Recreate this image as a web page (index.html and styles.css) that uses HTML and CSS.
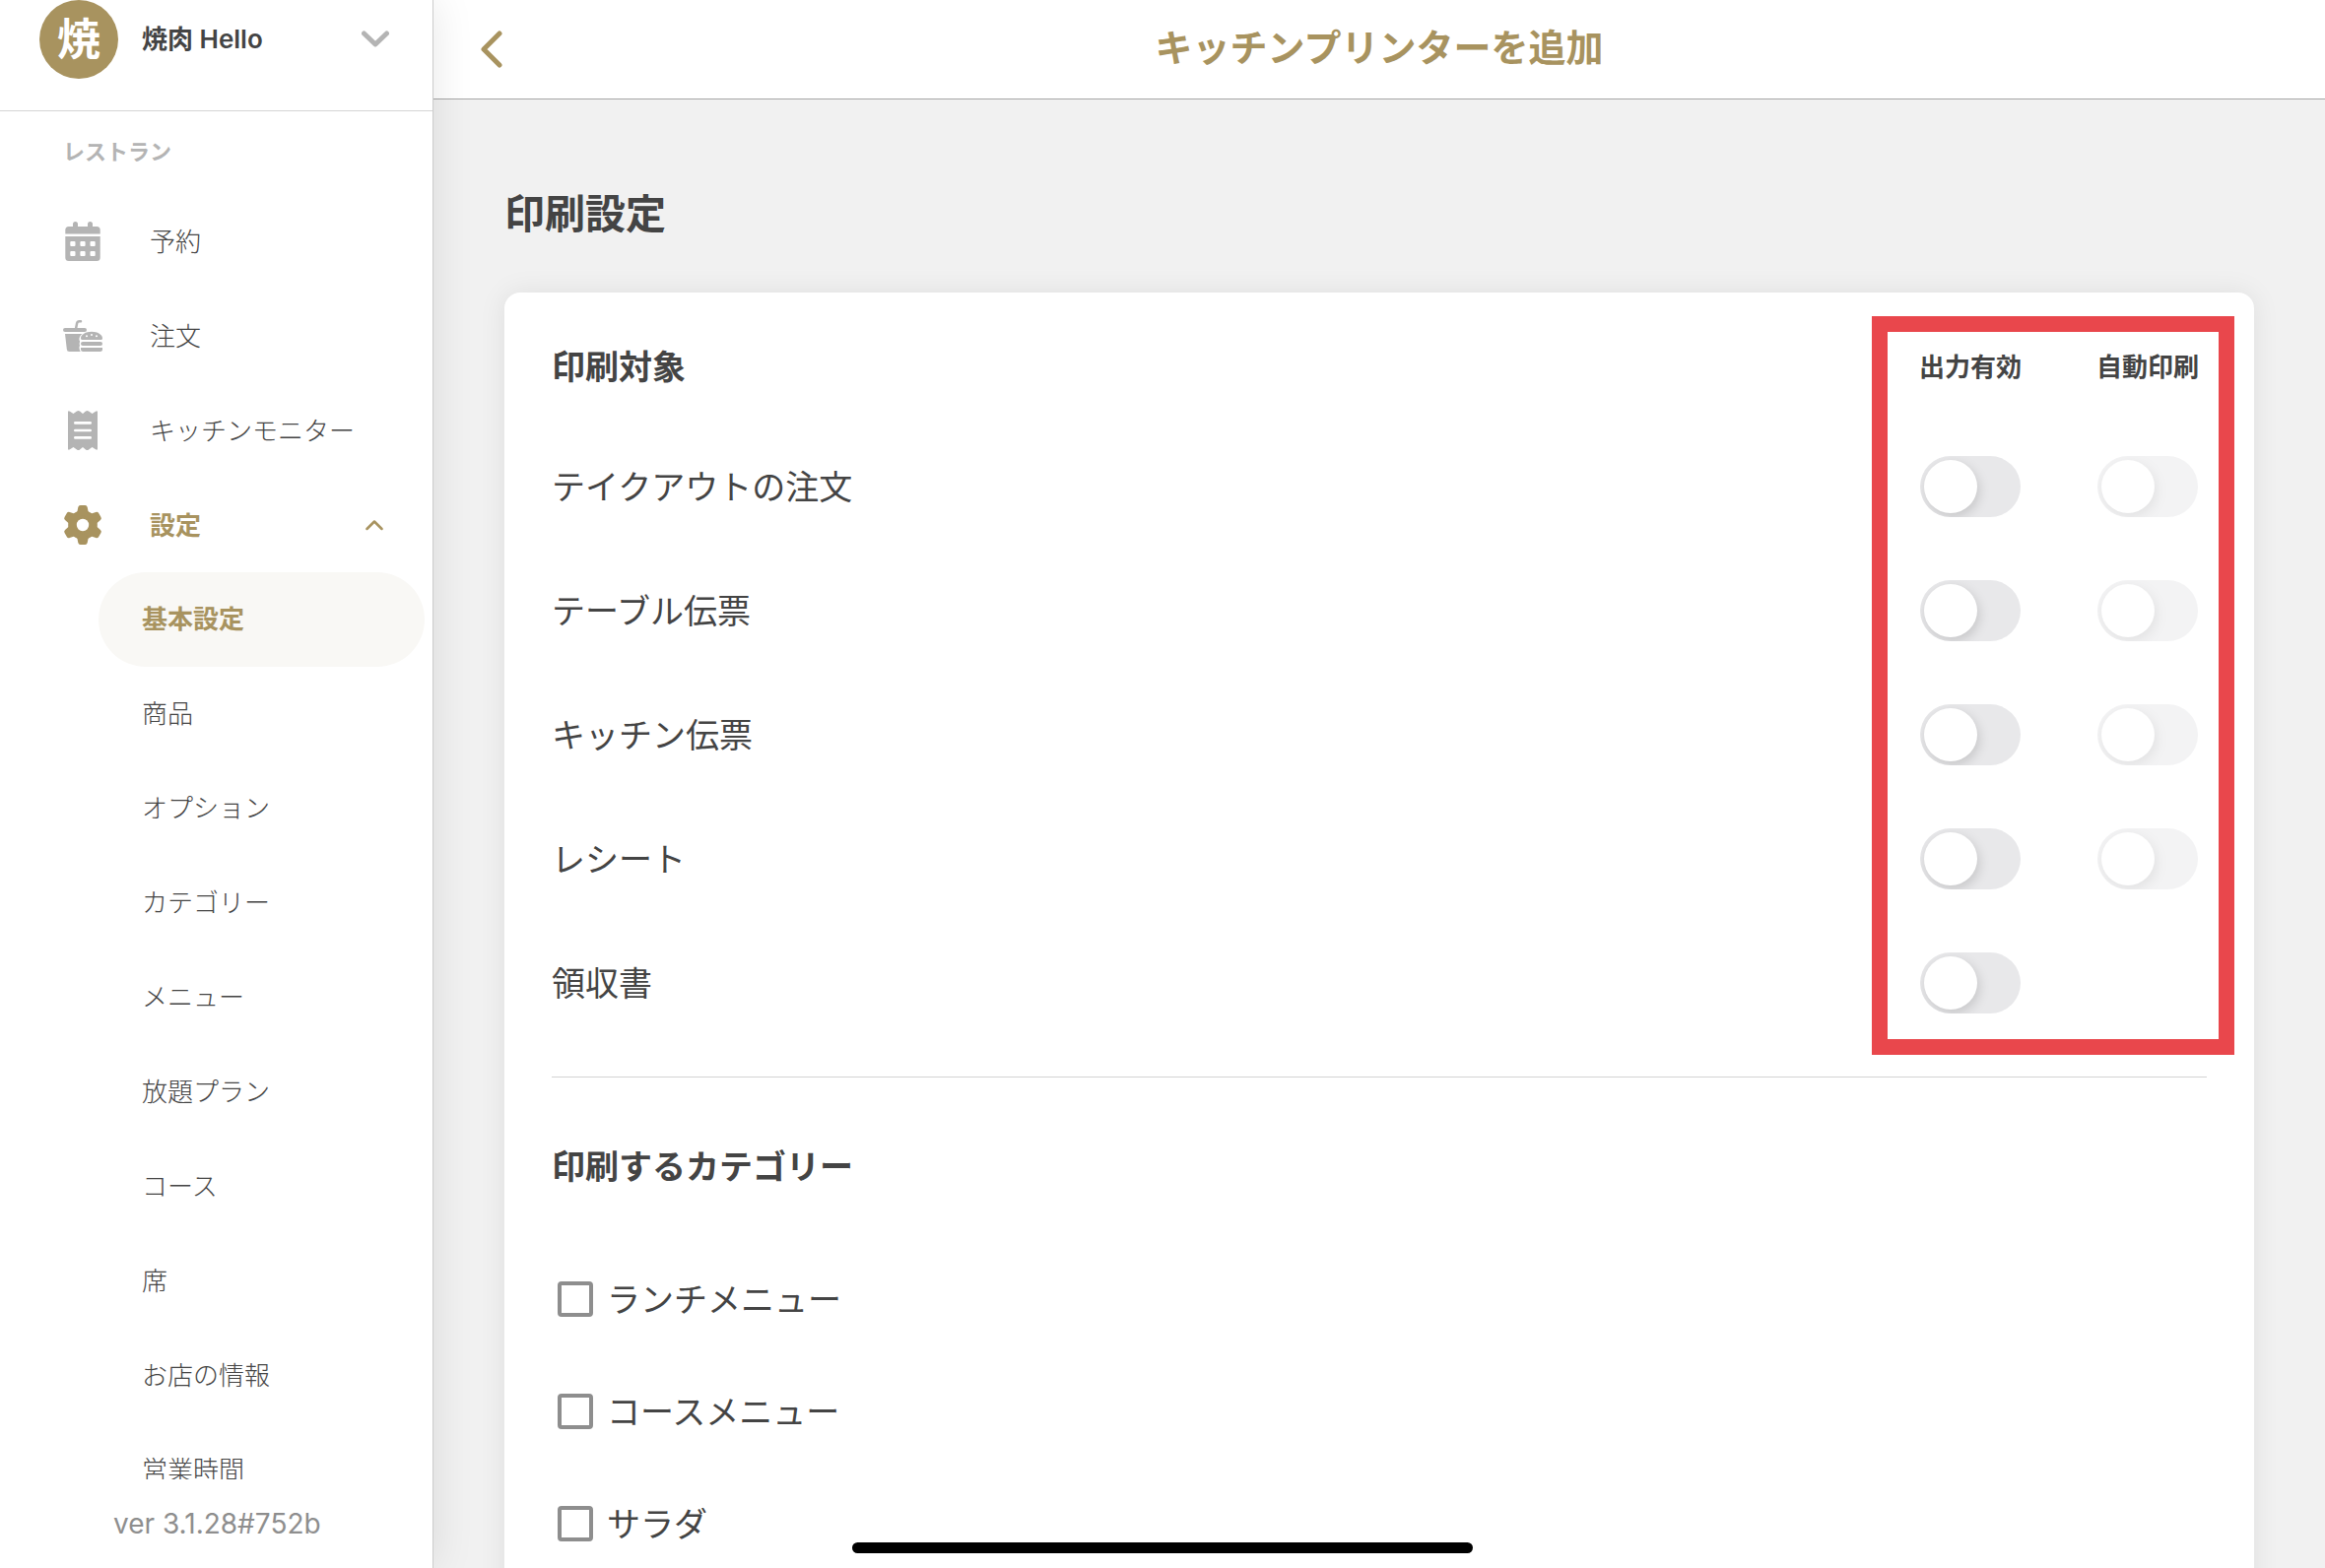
FILE: index.html
```html
<!DOCTYPE html>
<html lang="ja">
<head>
<meta charset="UTF-8">
<meta name="viewport" content="width=device-width, initial-scale=1.0">
<title>キッチンプリンターを追加</title>
<link rel="stylesheet" href="styles.css">
</head>
<body>

<div class="app">
  <aside class="sidebar">
    <button class="account" type="button">
      <span class="avatar">焼</span>
      <span class="account-name">焼肉 Hello</span>
      <svg class="chevron" viewBox="0 0 28 18"><path d="M2.500 3 14 14 25.500 3" fill="none" stroke="currentColor" stroke-width="5" stroke-linecap="round" stroke-linejoin="round"/></svg>
    </button>

    <nav class="menu">
      <h2 class="menu-title">レストラン</h2>
      <a class="menu-item" href="#">
        <svg class="icon" viewBox="0 0 40 40" fill="currentColor">
          <path d="M2.300 12.500V8.500a3.500 3.500 0 0 1 3.500-3.500H10V2.500a2.500 2.500 0 0 1 5 0V5h10V2.500a2.500 2.500 0 0 1 5 0V5h4.200a3.500 3.500 0 0 1 3.500 3.500v4z"/>
          <path fill-rule="evenodd" d="M2.300 15h35.400v21.500a3.500 3.500 0 0 1-3.500 3.500H5.800a3.500 3.500 0 0 1-3.500-3.500zM8.300 20a1 1 0 0 0-1 1v3a1 1 0 0 0 1 1h3.200a1 1 0 0 0 1-1v-3a1 1 0 0 0-1-1zM18.400 20a1 1 0 0 0-1 1v3a1 1 0 0 0 1 1h3.200a1 1 0 0 0 1-1v-3a1 1 0 0 0-1-1zM28.500 20a1 1 0 0 0-1 1v3a1 1 0 0 0 1 1h3.200a1 1 0 0 0 1-1v-3a1 1 0 0 0-1-1zM8.300 30a1 1 0 0 0-1 1v3a1 1 0 0 0 1 1h3.200a1 1 0 0 0 1-1v-3a1 1 0 0 0-1-1zM18.400 30a1 1 0 0 0-1 1v3a1 1 0 0 0 1 1h3.200a1 1 0 0 0 1-1v-3a1 1 0 0 0-1-1zM28.500 30a1 1 0 0 0-1 1v3a1 1 0 0 0 1 1h3.200a1 1 0 0 0 1-1v-3a1 1 0 0 0-1-1z"/>
        </svg>
        <span>予約</span>
      </a>
      <a class="menu-item" href="#">
        <svg class="icon" viewBox="0 0 40 40" fill="currentColor">
          <path d="M18 5.300h-1.500q-2 0-2.400 2L13 13" fill="none" stroke="currentColor" stroke-width="2.500" stroke-linecap="round"/>
          <rect x="0" y="12" width="24" height="4" rx="2"/>
          <path d="M2 18h17.500q-3.500 2.500-3 6.500.8.500.5 1.500-.8 2 0 4-.8 1-.5 2.500.2 2.500 1.300 3.500H6.500Q4 36 3.800 33.500z"/>
          <path fill-rule="evenodd" d="M18 22.500c0-4 5-6.800 11-6.800s11 2.800 11 6.800q0 1.500-1.500 1.500h-19Q18 24 18 22.500zM24 19.300a1 1 0 1 0 0 2 1 1 0 0 0 0-2zM29 18a1 1 0 1 0 0 2 1 1 0 0 0 0-2zM34 19.300a1 1 0 1 0 0 2 1 1 0 0 0 0-2z"/>
          <rect x="18" y="26" width="22" height="4" rx="2"/>
          <path d="M18 32h22v1.500q0 2.500-2.500 2.500h-17Q18 36 18 33.500z"/>
        </svg>
        <span>注文</span>
      </a>
      <a class="menu-item" href="#">
        <svg class="icon" viewBox="0 0 40 40">
          <path fill="currentColor" d="M5 1.500Q5-.5 7 .700L10.500 3 14 .600q1.500-1.200 3 0L20 3l3-2.400q1.500-1.200 3 0L29.500 3 33 .700q2-1.200 2 .8v37q0 2-2 .8L29.500 37 26 39.400q-1.500 1.200-3 0L20 37l-3 2.400q-1.500 1.200-3 0L10.500 37 7 39.300q-2 1.200-2-.8z"/>
          <path d="M12.300 12.400h15.400M12.300 20h15.400M12.300 27.400h15.400" stroke="#fff" stroke-width="2.600" stroke-linecap="round"/>
        </svg>
        <span>キッチンモニター</span>
      </a>
      <a class="menu-item active" href="#">
        <svg class="icon" viewBox="0 0 40 40" fill="currentColor">
          <defs>
            <path id="teeth" d="M12 8 14.500 6 15.300 2Q15.700 0 17.700 0h4.600q2 0 2.400 2l.8 4L28 8v24l-2.500 2-.8 4q-.4 2-2.400 2h-4.600q-2 0-2.400-2l-.8-4L12 32z"/>
          </defs>
          <use href="#teeth"/>
          <use href="#teeth" transform="rotate(60 20 20)"/>
          <use href="#teeth" transform="rotate(120 20 20)"/>
          <circle cx="20" cy="20" r="6.200" fill="#fff"/>
        </svg>
        <span>設定</span>
        <svg class="caret" viewBox="0 0 18 12"><path d="M1.500 10 9 2.500l7.500 7.500" fill="none" stroke="currentColor" stroke-width="2.500" stroke-linecap="round" stroke-linejoin="round"/></svg>
      </a>
      <div class="submenu">
        <a class="active" href="#">基本設定</a>
        <a href="#">商品</a>
        <a href="#">オプション</a>
        <a href="#">カテゴリー</a>
        <a href="#">メニュー</a>
        <a href="#">放題プラン</a>
        <a href="#">コース</a>
        <a href="#">席</a>
        <a href="#">お店の情報</a>
        <a href="#">営業時間</a>
      </div>
    </nav>

    <div class="version">ver 3.1.28#752b</div>
  </aside>

  <main class="main">
    <header class="topbar">
      <button class="back" type="button" aria-label="戻る">
        <svg viewBox="0 0 24 40"><path d="M19 4 3 20l16 16" fill="none" stroke="currentColor" stroke-width="5" stroke-linecap="round" stroke-linejoin="round"/></svg>
      </button>
      <h1>キッチンプリンターを追加</h1>
    </header>

    <div class="content">
      <h2 class="page-title">印刷設定</h2>

      <section class="card">
        <table class="targets">
          <thead>
            <tr>
              <th class="name">印刷対象</th>
              <th class="enabled" id="col-enabled">出力有効</th>
              <th class="auto" id="col-auto">自動印刷</th>
            </tr>
          </thead>
          <tbody>
            <tr>
              <td><label id="takeout" for="takeout-on">テイクアウトの注文</label></td>
              <td><input class="switch" type="checkbox" id="takeout-on"></td>
              <td><input class="switch" type="checkbox" aria-labelledby="takeout col-auto" disabled></td>
            </tr>
            <tr>
              <td><label id="table" for="table-on">テーブル伝票</label></td>
              <td><input class="switch" type="checkbox" id="table-on"></td>
              <td><input class="switch" type="checkbox" aria-labelledby="table col-auto" disabled></td>
            </tr>
            <tr>
              <td><label id="kitchen" for="kitchen-on">キッチン伝票</label></td>
              <td><input class="switch" type="checkbox" id="kitchen-on"></td>
              <td><input class="switch" type="checkbox" aria-labelledby="kitchen col-auto" disabled></td>
            </tr>
            <tr>
              <td><label id="receipt" for="receipt-on">レシート</label></td>
              <td><input class="switch" type="checkbox" id="receipt-on"></td>
              <td><input class="switch" type="checkbox" aria-labelledby="receipt col-auto" disabled></td>
            </tr>
            <tr>
              <td><label for="invoice-on">領収書</label></td>
              <td><input class="switch" type="checkbox" id="invoice-on"></td>
              <td></td>
            </tr>
          </tbody>
        </table>
        <div class="highlight"></div>

        <div class="categories">
          <h3>印刷するカテゴリー</h3>
          <label class="check"><input type="checkbox"><span>ランチメニュー</span></label>
          <label class="check"><input type="checkbox"><span>コースメニュー</span></label>
          <label class="check"><input type="checkbox"><span>サラダ</span></label>
        </div>
      </section>
    </div>
  </main>
</div>

<div class="home-indicator"></div>

</body>
</html>
```
FILE: styles.css
```css
* {
  box-sizing: border-box;
}

body {
  margin: 0;
  font-family: Inter, "Noto Sans CJK JP", sans-serif;
  font-size: 26px;
  line-height: 1.5;
  color: #444;
  background-color: #f1f1f1;
}

h1, h2, h3 {
  margin: 0;
}

a {
  color: inherit;
  text-decoration: none;
}

button {
  padding: 0;
  border: 0;
  background: none;
  font: inherit;
  color: inherit;
  cursor: pointer;
}

.app {
  display: flex;
  height: 100vh;
  overflow: hidden;
}

/* Sidebar */
.sidebar {
  position: relative;
  z-index: 1;
  display: flex;
  flex-direction: column;
  flex: 0 0 440px;
  background-color: #fff;
  border-right: 1px solid #ccc;
  box-shadow: 0 0 40px rgba(0, 0, 0, 0.1);
}

.account {
  display: flex;
  align-items: flex-start;
  flex: 0 0 113px;
  padding: 0 44px 0 40px;
  border-bottom: 1px solid #d4d4d4;
  line-height: 80px;
  text-align: left;
}

.avatar {
  width: 80px;
  height: 80px;
  margin-right: 24px;
  border-radius: 50%;
  background-color: #a8935f;
  color: #fff;
  font-size: 44px;
  font-weight: bold;
  text-align: center;
}

.account-name {
  flex: 1;
  font-weight: 600;
}

.chevron {
  width: 28px;
  height: 80px;
  color: #b4b4b4;
}

.menu {
  flex: 1;
  min-height: 0;
  overflow: hidden;
  font-weight: 300;
}

.menu-title {
  height: 84px;
  padding-left: 64px;
  font-size: 22px;
  line-height: 82px;
  color: #b4b4b4;
}

.menu-item {
  display: flex;
  align-items: center;
  height: 96px;
  padding: 0 50px 0 64px;
}

.menu-item span {
  flex: 1;
  margin-left: 48px;
}

.icon {
  width: 40px;
  height: 40px;
  color: #b4b4b4;
}

.caret {
  width: 18px;
  height: 12px;
}

.active,
.active .icon {
  color: #a8935f;
  font-weight: bold;
}

.submenu a {
  display: block;
  height: 96px;
  margin: 0 8px 0 100px;
  padding-left: 44px;
  border-radius: 48px;
  line-height: 96px;
}

.submenu .active {
  background-color: #f9f8f5;
}

.version {
  flex: 0 0 90px;
  padding-left: 115px;
  font-size: 28px;
  line-height: 90px;
  color: #8e8e8e;
}

/* Main */
.main {
  flex: 1;
  min-width: 0;
}

.topbar {
  display: flex;
  align-items: center;
  height: 101px;
  padding: 0 48px;
  background-color: #fff;
  border-bottom: 1px solid #a6a6a6;
  color: #a8935f;
}

.topbar h1 {
  flex: 1;
  padding: 0 24px 4px 0;
  font-size: 38px;
  text-align: center;
}

.back svg {
  display: block;
  width: 24px;
  height: 40px;
}

.content {
  padding: 88px 72px 0;
}

.page-title {
  margin-bottom: 52px;
  font-size: 41px;
  line-height: 56px;
}

.card {
  position: relative;
  padding: 16px 48px 48px;
  border-radius: 16px;
  background-color: #fff;
  box-shadow: 0 0 28px rgba(0, 0, 0, 0.08);
}

.targets {
  width: 100%;
  border-collapse: collapse;
  table-layout: fixed;
  font-size: 34px;
}

.targets th {
  height: 118px;
  padding: 0;
  font-size: 26px;
}

.targets .name {
  font-size: 34px;
  text-align: left;
}

.targets .enabled {
  width: 240px;
}

.targets .auto {
  width: 120px;
}

.targets td {
  height: 126px;
  padding: 0;
  text-align: center;
}

.targets td:first-child {
  text-align: left;
}

.switch {
  appearance: none;
  display: block;
  width: 102px;
  height: 62px;
  margin: 0 auto;
  padding: 4px;
  border-radius: 31px;
  background-color: #e8e8ea;
  overflow: hidden;
}

.switch::before {
  content: "";
  display: block;
  width: 54px;
  height: 54px;
  border-radius: 50%;
  background-color: #fff;
  box-shadow: 2px 4px 12px rgba(0, 0, 0, 0.15);
}

.switch:checked::before {
  margin-left: 40px;
}

.switch:disabled {
  opacity: 0.5;
}

/* Red frame over the switch columns */
.highlight {
  position: absolute;
  top: 24px;
  right: 20px;
  width: 368px;
  height: 750px;
  border: 16px solid #e9474c;
  pointer-events: none;
}

.categories {
  margin-top: 32px;
  padding-top: 67px;
  border-top: 1px solid #d4d4d4;
  font-size: 34px;
}

.categories h3 {
  margin-bottom: 53px;
  font-size: 34px;
  line-height: 48px;
}

.check {
  display: flex;
  align-items: center;
  gap: 14px;
  height: 114px;
  padding-left: 6px;
}

.check input {
  appearance: none;
  width: 36px;
  height: 36px;
  margin: 0;
  border: 4px solid #8e8e8e;
  border-radius: 4px;
}

.check input:checked {
  background-color: #a8935f;
}

.home-indicator {
  position: fixed;
  bottom: 15px;
  left: 50%;
  z-index: 2;
  width: 630px;
  height: 11px;
  margin-left: -315px;
  border-radius: 6px;
  background-color: #000;
}
```
